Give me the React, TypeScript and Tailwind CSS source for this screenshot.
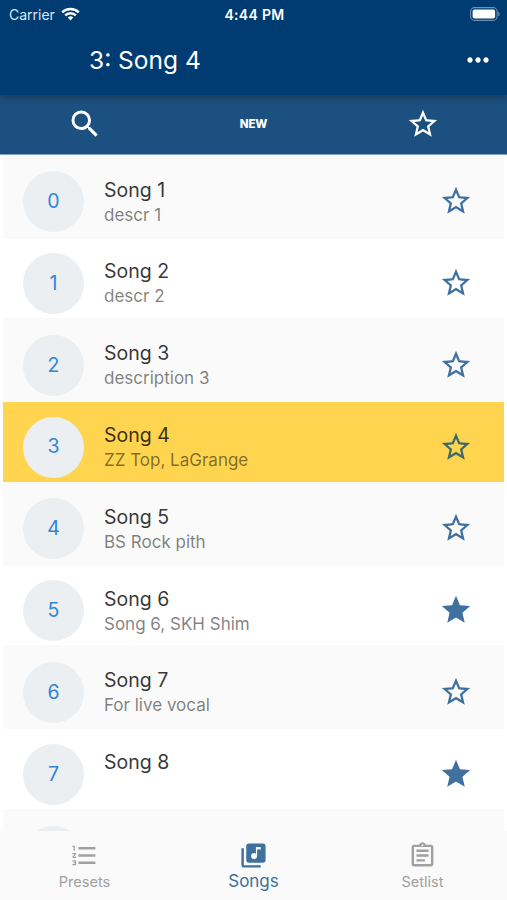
import React, { useState } from 'react';
import { MdSearch, MdStarBorder, MdStar, MdLibraryMusic, MdFormatListNumbered, MdOutlineAssignment, MdMoreHoriz } from 'react-icons/md';

interface Song {
  name: string;
  description?: string;
  favorite?: boolean;
}

const SONGS: Song[] = [
  { name: 'Song 1', description: 'descr 1' },
  { name: 'Song 2', description: 'descr 2' },
  { name: 'Song 3', description: 'description 3' },
  { name: 'Song 4', description: 'ZZ Top, LaGrange' },
  { name: 'Song 5', description: 'BS Rock pith' },
  { name: 'Song 6', description: 'Song 6, SKH Shim', favorite: true },
  { name: 'Song 7', description: 'For live vocal' },
  { name: 'Song 8', favorite: true },
];

const StatusBar: React.FC = () => (
  <div className="grid h-7 grid-cols-3 items-center pl-[9px] pr-[7px] text-white">
    <div className="flex items-center gap-[6px]">
      <span className="text-[14px] text-[#dbe6f2]">Carrier</span>
      <svg width="19" height="14" viewBox="0 0 19 14" fill="none" stroke="white" strokeWidth="2.5">
        <path d="M1.2 5.3a11.8 11.8 0 0 1 16.6 0" />
        <path d="M4.2 8.4a7.5 7.5 0 0 1 10.6 0" />
        <path d="M9.5 13.5 6.7 10.6a4 4 0 0 1 5.6 0z" fill="white" stroke="none" />
      </svg>
    </div>
    <span className="text-center text-[14px] font-semibold tracking-[0.3px]">4:44 PM</span>
    <svg className="justify-self-end" width="30" height="14" viewBox="0 0 30 14">
      <rect x="0.6" y="0.6" width="26.5" height="12.8" rx="4" fill="none" stroke="#6d91b5" strokeWidth="1.1" />
      <rect x="2.6" y="2.5" width="22.5" height="9" rx="2" fill="white" />
      <path d="M28.2 4.8v4.4c1.9-.7 1.9-3.7 0-4.4z" fill="#6d91b5" />
    </svg>
  </div>
);

const SongRow: React.FC<{ song: Song; index: number; selected: boolean; onSelect: () => void }> = ({
  song,
  index,
  selected,
  onSelect,
}) => {
  const even = index % 2 === 0;
  const background = selected ? 'bg-[#ffd54f]' : even ? 'bg-[#fafafa]' : 'bg-white';
  const Star = song.favorite ? MdStar : MdStarBorder;

  return (
    <li
      onClick={onSelect}
      className={`flex shrink-0 items-start pl-5 pr-[31.5px] ${even ? 'h-[84.1px] pt-[16.6px]' : 'h-[79.5px] pt-[14.3px]'} ${background}`}
    >
      <div className="flex size-[61px] shrink-0 items-center justify-center rounded-full bg-[#eceff1] text-[19.5px] text-[#2f86d6]">
        {index}
      </div>
      <div className="ml-5 flex-1 pt-[5.5px]">
        <div className="text-[19.5px] leading-[26px] text-black/80">{song.name}</div>
        <div className="text-[17px] leading-[25px] text-black/50">{song.description}</div>
      </div>
      <Star className={`mt-[13px] size-[34px] ${selected ? 'text-[#3e6a68]' : 'text-[#3f709e]'}`} />
    </li>
  );
};

const App: React.FC = () => {
  const [selected, setSelected] = useState<number>(3);

  return (
    <div className="flex h-[900px] w-[507px] flex-col overflow-hidden bg-white font-['Inter',sans-serif]">
      <header className="relative z-10 h-[95px] shrink-0 bg-[#003c71] shadow-[0_2px_7px_rgba(30,40,50,0.6)]">
        <StatusBar />
        <div className="flex h-16 items-center justify-between pl-[89px] pr-[13px] text-white">
          <h1 className="pt-px text-[24.5px]">
            {selected}: {SONGS[selected].name}
          </h1>
          <MdMoreHoriz className="mb-px size-[32px]" />
        </div>
      </header>

      <div className="grid h-[59.6px] shrink-0 grid-cols-3 place-items-center border-b border-[#7fa0c0] bg-[#1b5080] text-white">
        <MdSearch className="size-[36px]" />
        <span className="text-[11.5px] font-extrabold tracking-[-0.2px]">NEW</span>
        <MdStarBorder className="size-[34px]" />
      </div>

      <ul className="mx-[3px] flex min-h-0 flex-1 flex-col overflow-hidden">
        {SONGS.map((song, index) => (
          <SongRow
            key={song.name}
            song={song}
            index={index}
            selected={index === selected}
            onSelect={() => setSelected(index)}
          />
        ))}
        {/* top of the next, empty slot */}
        <li className="h-[84.1px] shrink-0 bg-[#fafafa] pl-5 pt-[16.6px]">
          <div className="size-[61px] rounded-full bg-[#eceff1]" />
        </li>
      </ul>

      <nav className="grid h-[69px] shrink-0 grid-cols-3 bg-[#fafafa] text-[#a0a0a0]">
        <div className="flex flex-col items-center pt-[10px]">
          <MdFormatListNumbered className="size-[29px]" />
          <span className="text-[14.5px] leading-[24px]">Presets</span>
        </div>
        <div className="flex flex-col items-center pt-[10px] text-[#3f709e]">
          <MdLibraryMusic className="size-[29px]" />
          <span className="text-[17px] leading-[22px]">Songs</span>
        </div>
        <div className="flex flex-col items-center pt-[10px]">
          <MdOutlineAssignment className="size-[29px]" />
          <span className="text-[14.5px] leading-[24px]">Setlist</span>
        </div>
      </nav>
    </div>
  );
};

export default App;
